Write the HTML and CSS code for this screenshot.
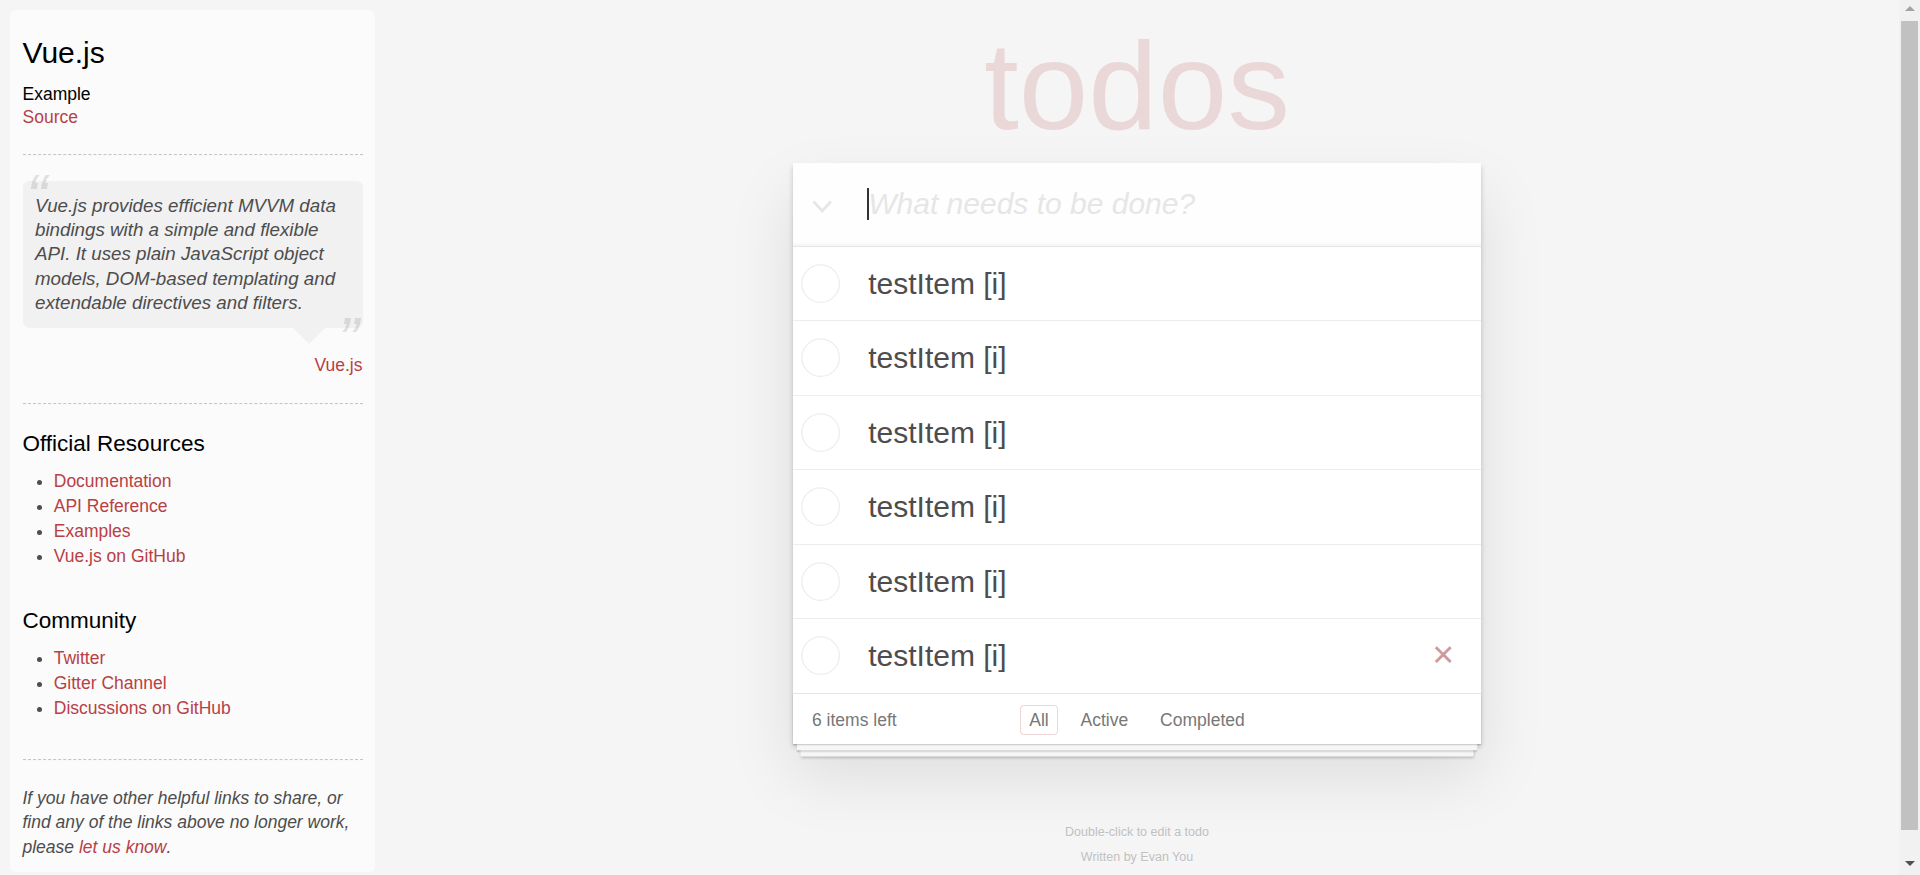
FILE: index.html
```html
<!DOCTYPE html>
<html lang="en">
<head>
<meta charset="utf-8">
<title>Vue.js • TodoMVC</title>
<link rel="stylesheet" href="styles.css">
</head>
<body>
<div class="page">
  <aside class="learn">
    <div class="learn-header">
      <h3>Vue.js</h3>
      <h5>Example</h5>
      <a href="#">Source</a>
    </div>
    <hr>
    <blockquote class="quote">
      <div class="speech-bubble">
        <p>Vue.js provides efficient MVVM data bindings with a simple and flexible API. It uses plain JavaScript object models, DOM-based templating and extendable directives and filters.</p>
      </div>
      <div class="quote-source"><a href="#">Vue.js</a></div>
    </blockquote>
    <hr>
    <h4>Official Resources</h4>
    <ul>
      <li><a href="#">Documentation</a></li>
      <li><a href="#">API Reference</a></li>
      <li><a href="#">Examples</a></li>
      <li><a href="#">Vue.js on GitHub</a></li>
    </ul>
    <h4>Community</h4>
    <ul>
      <li><a href="#">Twitter</a></li>
      <li><a href="#">Gitter Channel</a></li>
      <li><a href="#">Discussions on GitHub</a></li>
    </ul>
    <div class="learn-footer">
      <hr>
      <em>If you have other helpful links to share, or find any of the links above no longer work, please <a href="#">let us know</a>.</em>
    </div>
  </aside>

  <main class="stage">
    <div class="column">
      <h1 class="title">todos</h1>
      <section class="todoapp">
        <header class="header">
          <span class="toggle-all">
            <svg width="18" height="12" viewBox="0 0 18 12"><polyline points="2,2 9,9.5 16,2" fill="none" stroke="#e6e6e6" stroke-width="2.2"/></svg>
          </span>
          <span class="input-wrap">
            <input class="new-todo" placeholder="What needs to be done?">
          </span>
        </header>
        <div class="main">
          <ul class="todo-list">
            <li class="todo"><span class="toggle"><svg width="33" height="33" viewBox="0 0 33 33"><circle cx="16.5" cy="16.5" r="15" fill="none" stroke="#ededed" stroke-width="1"/></svg></span><label>testItem [i]</label></li>
            <li class="todo"><span class="toggle"><svg width="33" height="33" viewBox="0 0 33 33"><circle cx="16.5" cy="16.5" r="15" fill="none" stroke="#ededed" stroke-width="1"/></svg></span><label>testItem [i]</label></li>
            <li class="todo"><span class="toggle"><svg width="33" height="33" viewBox="0 0 33 33"><circle cx="16.5" cy="16.5" r="15" fill="none" stroke="#ededed" stroke-width="1"/></svg></span><label>testItem [i]</label></li>
            <li class="todo"><span class="toggle"><svg width="33" height="33" viewBox="0 0 33 33"><circle cx="16.5" cy="16.5" r="15" fill="none" stroke="#ededed" stroke-width="1"/></svg></span><label>testItem [i]</label></li>
            <li class="todo"><span class="toggle"><svg width="33" height="33" viewBox="0 0 33 33"><circle cx="16.5" cy="16.5" r="15" fill="none" stroke="#ededed" stroke-width="1"/></svg></span><label>testItem [i]</label></li>
            <li class="todo"><span class="toggle"><svg width="33" height="33" viewBox="0 0 33 33"><circle cx="16.5" cy="16.5" r="15" fill="none" stroke="#ededed" stroke-width="1"/></svg></span><label>testItem [i]</label><button class="destroy">×</button></li>
          </ul>
        </div>
        <footer class="footer">
          <span class="todo-count"><strong>6</strong> items left</span>
          <ul class="filters">
            <li><a href="#" class="selected">All</a></li>
            <li><a href="#">Active</a></li>
            <li><a href="#">Completed</a></li>
          </ul>
        </footer>
      </section>
      <footer class="info">
        <p>Double-click to edit a todo</p>
        <p>Written by Evan You</p>
      </footer>
    </div>
  </main>
</div>
<div class="scrollbar" aria-hidden="true">
  <span class="sb-btn sb-up"></span>
  <span class="sb-track"><span class="sb-thumb"></span></span>
  <span class="sb-btn sb-down"></span>
</div>
</body>
</html>
```

FILE: styles.css
```css
html {
  background: #f5f5f5;
}

body {
  margin: 0;
  height: 100vh;
  overflow: hidden;
  display: flex;
  background: #f5f5f5;
}

.page {
  flex: 1;
  min-width: 0;
  zoom: 1.25;
  display: flex;
  align-items: flex-start;
  font-family: "Liberation Sans", Arial, Helvetica, sans-serif;
  font-size: 14px;
  font-weight: 300;
  line-height: 19.6px;
  color: #4d4d4d;
}

/* ---------- window scrollbar ---------- */
.scrollbar {
  flex: none;
  width: 21px;
  display: flex;
  flex-direction: column;
  background: #f1f1f1;
}

.sb-btn {
  flex: none;
  height: 21px;
  display: flex;
  align-items: center;
  justify-content: center;
}

.sb-up::before {
  content: "";
  border-left: 5px solid transparent;
  border-right: 5px solid transparent;
  border-bottom: 5px solid #a3a3a3;
  margin-top: -4px;
}

.sb-down::before {
  content: "";
  border-left: 5px solid transparent;
  border-right: 5px solid transparent;
  border-top: 5px solid #505050;
  margin-top: -3px;
}

.sb-track {
  flex: 1;
  display: flex;
  flex-direction: column;
  padding: 0 2px;
}

.sb-thumb {
  height: 809px;
  background: #c1c1c1;
}

/* ---------- learn sidebar ---------- */
.learn {
  flex: none;
  width: 272px;
  margin: 8px 0 0 8px;
  padding: 10px;
  border-radius: 5px;
  background: rgba(255, 255, 255, 0.6);
}

.learn a {
  font-weight: normal;
  text-decoration: none;
  color: #b83f45;
}

.learn h3,
.learn h4,
.learn h5 {
  margin: 10px 0;
  font-weight: 500;
  line-height: 1.2;
  color: #000;
}

.learn h3 {
  font-size: 24px;
}

.learn h4 {
  font-size: 18px;
}

.learn h5 {
  margin-bottom: 0;
  font-size: 14px;
}

.learn ul {
  padding: 0;
  margin: 0 0 30px 25px;
}

.learn li {
  line-height: 20px;
}

.learn p {
  font-size: 15px;
  font-weight: 300;
  line-height: 1.3;
  margin: 0;
}

.learn hr {
  margin: 20px 0;
  border: 0;
  border-top: 1px dashed #c5c5c5;
  border-bottom: 1px dashed #f7f7f7;
}

.quote {
  margin: 20px 0 0 0;
}

.speech-bubble {
  position: relative;
  padding: 10px;
  background: rgba(0, 0, 0, 0.04);
  border-radius: 5px;
}

.speech-bubble::after {
  content: "";
  position: absolute;
  top: 100%;
  right: 30px;
  border: 13px solid transparent;
  border-top-color: rgba(0, 0, 0, 0.04);
}

.quote p {
  font-style: italic;
}

.quote p::before {
  content: "\201C";
  font-size: 50px;
  opacity: 0.15;
  position: absolute;
  top: -20px;
  left: 3px;
}

.quote p::after {
  content: "\201D";
  font-size: 50px;
  opacity: 0.15;
  position: absolute;
  bottom: -42px;
  right: 3px;
}

.quote-source {
  margin-top: 20.4px;
  text-align: right;
}

.learn-footer em {
  font-style: italic;
}

/* ---------- todo app ---------- */
.stage {
  flex: 1;
  min-width: 0;
}

.column {
  max-width: 550px;
  margin: 0 auto;
  padding-bottom: 18px;
}

.title {
  margin: 0;
  height: 130px;
  box-sizing: border-box;
  padding-top: 18px;
  font-size: 100px;
  line-height: 100px;
  font-weight: 100;
  text-align: center;
  color: rgba(175, 47, 47, 0.15);
}

.todoapp {
  background: #fff;
  box-shadow: 0 2px 4px 0 rgba(0, 0, 0, 0.2), 0 25px 50px 0 rgba(0, 0, 0, 0.1);
}

.header {
  display: flex;
  align-items: center;
  background: rgba(0, 0, 0, 0.003);
  box-shadow: inset 0 -2px 1px rgba(0, 0, 0, 0.03);
}

.toggle-all {
  flex: none;
  display: flex;
  width: 60px;
  box-sizing: border-box;
  padding: 4px 0 0 14px;
}

.input-wrap {
  flex: 1;
  min-width: 0;
  display: flex;
  position: relative;
}

.input-wrap::before {
  content: "";
  position: absolute;
  left: -0.8px;
  top: 20px;
  width: 1.6px;
  height: 26px;
  background: #333;
}

.new-todo {
  flex: 1;
  min-width: 0;
  margin: 0;
  box-sizing: content-box;
  height: 34.6px;
  padding: 16px 16px 16px 0;
  border: 0;
  font-family: inherit;
  font-weight: 300;
  font-size: 24px;
  line-height: 34.6px;
  color: #4d4d4d;
  background: transparent;
  outline: none;
}

.new-todo::placeholder {
  font-style: italic;
  font-weight: 300;
  color: #e6e6e6;
}

.main {
  border-top: 1px solid #e6e6e6;
}

.todo-list {
  margin: 0;
  padding: 0;
  list-style: none;
}

.todo {
  display: flex;
  align-items: center;
  font-size: 24px;
  border-bottom: 1px solid #ededed;
}

.todo:last-child {
  border-bottom: none;
}

.toggle {
  flex: none;
  display: flex;
  width: 60px;
  box-sizing: border-box;
  padding-left: 5px;
}

.todo label {
  flex: 1;
  display: block;
  padding: 15px 15px 15px 0;
  line-height: 1.2;
  word-break: break-all;
}

.destroy {
  flex: none;
  width: 40px;
  height: 40px;
  margin: 0 10px 3px 0;
  padding: 0;
  border: 0;
  background: none;
  font-family: inherit;
  font-weight: 300;
  font-size: 30px;
  line-height: 19.6px;
  color: #cc9a9a;
}

.footer {
  display: grid;
  grid-template-columns: 1fr auto 1fr;
  align-items: center;
  height: 20px;
  padding: 11px 15px 9px;
  color: #777;
  border-top: 1px solid #e6e6e6;
  box-shadow: 0 1px 1px rgba(0, 0, 0, 0.2),
    0 8px 0 -3px #f6f6f6,
    0 9px 1px -3px rgba(0, 0, 0, 0.2),
    0 16px 0 -6px #f6f6f6,
    0 17px 2px -6px rgba(0, 0, 0, 0.2);
}

.todo-count {
  justify-self: start;
}

.todo-count strong {
  font-weight: 300;
}

.filters {
  grid-column: 2;
  margin: 0;
  padding: 0;
  list-style: none;
  white-space: nowrap;
}

.filters li {
  display: inline;
}

.filters a {
  color: inherit;
  margin: 3px;
  padding: 3px 7px;
  text-decoration: none;
  border: 1px solid transparent;
  border-radius: 3px;
}

.filters a.selected {
  border-color: rgba(175, 47, 47, 0.2);
}

.info {
  margin: 66px auto 0;
  color: #bfbfbf;
  font-size: 10px;
  text-shadow: 0 1px 0 rgba(255, 255, 255, 0.5);
  text-align: center;
}

.info p {
  line-height: 1;
  margin: 10px 0;
}
```
